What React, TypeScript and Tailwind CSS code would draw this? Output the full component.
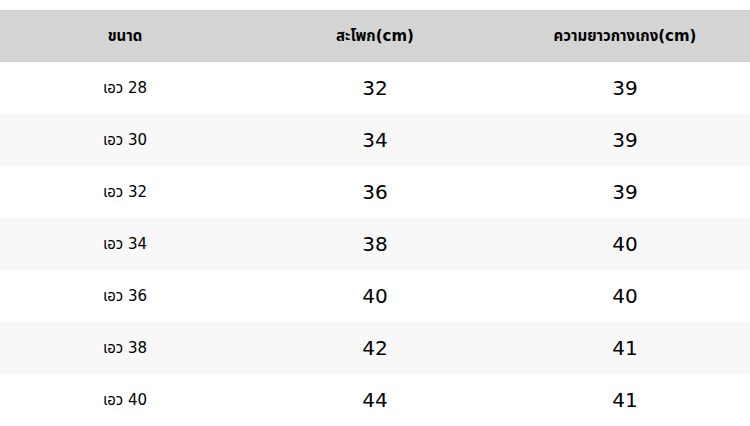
import React from 'react'

const rows = [
  { size: 'เอว 28', hip: '32', length: '39' },
  { size: 'เอว 30', hip: '34', length: '39' },
  { size: 'เอว 32', hip: '36', length: '39' },
  { size: 'เอว 34', hip: '38', length: '40' },
  { size: 'เอว 36', hip: '40', length: '40' },
  { size: 'เอว 38', hip: '42', length: '41' },
  { size: 'เอว 40', hip: '44', length: '41' },
]

export default function App() {
  return (
    <div
      className="w-[750px] h-[426px] bg-white pt-[10px] text-black overflow-hidden"
      style={{ fontFamily: '"DejaVu Sans", "Noto Sans Thai", "Noto Sans", sans-serif' }}
    >
      {/* Header */}
      <div className="grid grid-cols-3 h-[52px] items-center bg-[#d4d4d4] text-[15px] font-bold">
        <div className="text-center">ขนาด</div>
        <div className="text-center">สะโพก(cm)</div>
        <div className="text-center">ความยาวกางเกง(cm)</div>
      </div>

      {rows.map((row, i) => (
        <div
          key={row.size}
          className={`grid grid-cols-3 h-[52px] items-center ${i % 2 === 1 ? 'bg-[#f8f8f8]' : 'bg-white'}`}
        >
          <div className="text-center text-[15px]">{row.size}</div>
          <div className="text-center text-[20px]">{row.hip}</div>
          <div className="text-center text-[20px]">{row.length}</div>
        </div>
      ))}
    </div>
  )
}
